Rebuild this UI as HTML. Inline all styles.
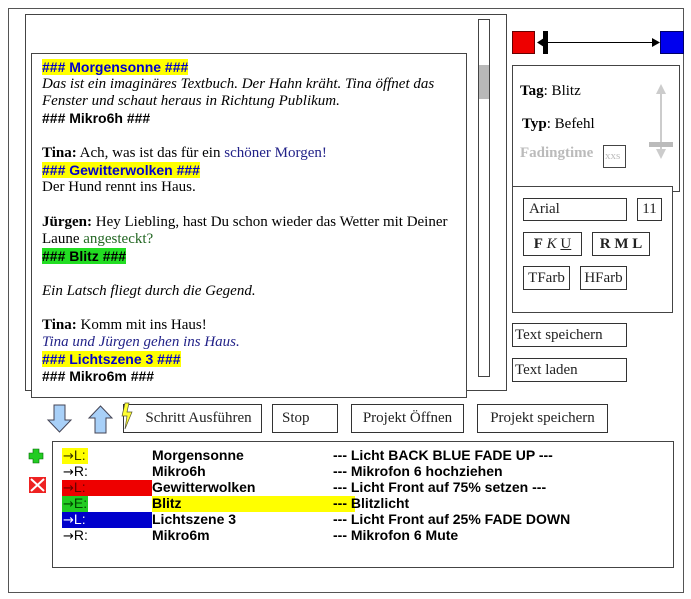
<!DOCTYPE html>
<html><head><meta charset="utf-8"><style>
body{margin:0;width:691px;height:599px;background:#fff;position:relative;overflow:hidden;font-family:"Liberation Serif",serif;}
.a{position:absolute;box-sizing:border-box;}
.b{border:1px solid #444;background:#fff;}
.t{position:absolute;left:10px;font-size:15px;line-height:17px;white-space:nowrap;color:#000;}
.h{font-family:"Liberation Sans",sans-serif;font-weight:bold;font-size:14px;}
.btn{position:absolute;box-sizing:border-box;border:1px solid #333;background:#fff;font-size:15px;color:#222;display:flex;align-items:center;justify-content:center;white-space:nowrap;}
.r{position:absolute;font-family:"Liberation Sans",sans-serif;font-weight:bold;font-size:14px;line-height:16px;white-space:nowrap;}
.l{position:absolute;font-family:"Liberation Sans",sans-serif;font-size:14px;line-height:16px;white-space:nowrap;}
.l span{font-family:"DejaVu Sans",sans-serif;font-size:13px;}
</style></head><body>
<div class="a" style="left:8px;top:8px;width:676px;height:585px;border:1px solid #555;"></div>
<div class="a b" style="left:25px;top:14px;width:482px;height:377px;"></div>
<div class="a" style="left:478px;top:19px;width:12px;height:358px;border:1px solid #444;background:#fff;"></div>
<div class="a" style="left:479px;top:65px;width:10px;height:34px;background:#b8b8b8;"></div>
<div class="a b" style="left:31px;top:53px;width:436px;height:345px;">
<div class="t" style="top:5px"><span class="h" style="background:#ff0;color:#00c">### Morgensonne ###</span></div>
<div class="t" style="top:22px;font-style:italic">Das ist ein imaginäres Textbuch. Der Hahn kräht. Tina öffnet das</div>
<div class="t" style="top:39px;font-style:italic">Fenster und schaut heraus in Richtung Publikum.</div>
<div class="t" style="top:56px"><span class="h">### Mikro6h ###</span></div>
<div class="t" style="top:91px"><b>Tina:</b> Ach, was ist das für ein <span style="color:#228">schöner Morgen!</span></div>
<div class="t" style="top:108px"><span class="h" style="background:#ff0;color:#00c">### Gewitterwolken ###</span></div>
<div class="t" style="top:125px">Der Hund rennt ins Haus.</div>
<div class="t" style="top:160px"><b>Jürgen:</b> Hey Liebling, hast Du schon wieder das Wetter mit Deiner</div>
<div class="t" style="top:177px">Laune <span style="color:#262">angesteckt?</span></div>
<div class="t" style="top:194px"><span class="h" style="background:#2d2;">### Blitz ###</span></div>
<div class="t" style="top:229px;font-style:italic">Ein Latsch fliegt durch die Gegend.</div>
<div class="t" style="top:263px"><b>Tina:</b> Komm mit ins Haus!</div>
<div class="t" style="top:280px;font-style:italic;color:#228">Tina und Jürgen gehen ins Haus.</div>
<div class="t" style="top:297px"><span class="h" style="background:#ff0;color:#00c">### Lichtszene 3 ###</span></div>
<div class="t" style="top:314px"><span class="h">### Mikro6m ###</span></div>
</div>
<!-- right -->
<div class="a" style="left:512px;top:31px;width:23px;height:23px;background:#e00;border:1px solid #600;"></div>
<div class="a" style="left:660px;top:31px;width:24px;height:23px;background:#00e;border:1px solid #006;"></div>
<svg class="a" style="left:535px;top:31px" width="126" height="23"><rect x="8" y="0" width="5" height="23" fill="#000"/><line x1="3" y1="11.5" x2="120" y2="11.5" stroke="#000"/><polygon points="2,11.5 9,7 9,16" fill="#000"/><polygon points="125,11.5 117,7 117,16" fill="#000"/></svg>
<div class="a b" style="left:512px;top:65px;width:168px;height:127px;"></div>
<div class="a" style="left:520px;top:83px;font-size:15px;"><b>Tag</b>: Blitz</div>
<div class="a" style="left:522px;top:116px;font-size:15px;"><b>Typ</b>: Befehl</div>
<div class="a" style="left:520px;top:145px;font-size:15px;color:#bbb;font-weight:bold;">Fadingtime</div>
<div class="a" style="left:603px;top:145px;width:23px;height:23px;border:1px solid #444;font-size:11px;color:#bbb;padding:4px 0 0 1px;">xxs</div>
<svg class="a" style="left:648px;top:82px" width="28" height="80"><line x1="13" y1="8" x2="13" y2="72" stroke="#ccc" stroke-width="2"/><polygon points="13,2 8,12 18,12" fill="#ccc"/><polygon points="13,77 8,67 18,67" fill="#ccc"/><rect x="1" y="60" width="24" height="5" fill="#bbb"/></svg>
<div class="a b" style="left:512px;top:186px;width:161px;height:127px;"></div>
<div class="btn" style="left:523px;top:198px;width:104px;height:23px;justify-content:flex-start;padding-left:5px;">Arial</div>
<div class="btn" style="left:637px;top:198px;width:25px;height:23px;">11</div>
<div class="btn" style="left:523px;top:232px;width:59px;height:24px;font-weight:bold;">F&nbsp;<i style="font-weight:normal">K</i>&nbsp;<u style="font-weight:normal">U</u></div>
<div class="btn" style="left:592px;top:232px;width:58px;height:24px;font-weight:bold;">R M L</div>
<div class="btn" style="left:523px;top:266px;width:47px;height:24px;">TFarb</div>
<div class="btn" style="left:580px;top:266px;width:47px;height:24px;">HFarb</div>
<div class="btn" style="left:512px;top:323px;width:115px;height:24px;justify-content:flex-start;padding-left:2px;">Text speichern</div>
<div class="btn" style="left:512px;top:358px;width:115px;height:24px;justify-content:flex-start;padding-left:2px;">Text laden</div>
<!-- bottom -->
<svg class="a" style="left:46px;top:404px" width="70" height="30"><polygon points="8,1 19,1 19,16 25,16 13.5,28 2,16 8,16" fill="#a8d0f8" stroke="#445"/><polygon points="49,29 60,29 60,14 66,14 54.5,2 43,14 49,14" fill="#a8d0f8" stroke="#445"/></svg>
<div class="btn" style="left:123px;top:404px;width:139px;height:29px;padding-left:12px;">Schritt Ausführen</div>
<svg class="a" style="left:121px;top:402px" width="14" height="28"><polygon points="4,1 8,1 6,10 11,10 4,27 6,14 1,14" fill="#ff3" stroke="#553" stroke-width="0.7"/></svg>
<div class="btn" style="left:272px;top:404px;width:66px;height:29px;justify-content:flex-start;padding-left:9px;">Stop</div>
<div class="btn" style="left:351px;top:404px;width:113px;height:29px;">Projekt Öffnen</div>
<div class="btn" style="left:477px;top:404px;width:131px;height:29px;">Projekt speichern</div>
<div class="a b" style="left:52px;top:441px;width:622px;height:127px;"></div>
<svg class="a" style="left:28px;top:445px" width="22" height="48"><path d="M5,4 h6 v4 h4 v6 h-4 v4 h-6 v-4 h-4 v-6 h4z" fill="#2c2" stroke="#060" stroke-width="0.6"/><rect x="1" y="32" width="17" height="16" fill="#e22"/><path d="M3,34 L16,46 M16,34 L3,46" stroke="#fff" stroke-width="2"/></svg>
<div class="a" style="left:62px;top:448px;width:26px;height:16px;background:#ff0"></div>
<div class="a" style="left:62px;top:480px;width:90px;height:16px;background:#e00"></div>
<div class="a" style="left:62px;top:496px;width:26px;height:16px;background:#2c2"></div>
<div class="a" style="left:152px;top:496px;width:203px;height:16px;background:#ff0"></div>
<div class="a" style="left:62px;top:512px;width:90px;height:16px;background:#00c"></div>
<div class="l" style="left:63px;top:447px;color:#330"><span>→</span>L:</div>
<div class="l" style="left:63px;top:463px"><span>→</span>R:</div>
<div class="l" style="left:63px;top:479px;color:#600"><span>→</span>L:</div>
<div class="l" style="left:63px;top:495px;color:#040"><span>→</span>E:</div>
<div class="l" style="left:63px;top:511px;color:#fff"><span>→</span>L:</div>
<div class="l" style="left:63px;top:527px"><span>→</span>R:</div>
<div class="r" style="left:152px;top:447px">Morgensonne</div>
<div class="r" style="left:152px;top:463px">Mikro6h</div>
<div class="r" style="left:152px;top:479px">Gewitterwolken</div>
<div class="r" style="left:152px;top:495px">Blitz</div>
<div class="r" style="left:152px;top:511px">Lichtszene 3</div>
<div class="r" style="left:152px;top:527px">Mikro6m</div>
<div class="r" style="left:333px;top:447px">--- Licht BACK BLUE FADE UP ---</div>
<div class="r" style="left:333px;top:463px">--- Mikrofon 6 hochziehen</div>
<div class="r" style="left:333px;top:479px">--- Licht Front auf 75% setzen ---</div>
<div class="r" style="left:333px;top:495px">--- Blitzlicht</div>
<div class="r" style="left:333px;top:511px">--- Licht Front auf 25% FADE DOWN</div>
<div class="r" style="left:333px;top:527px">--- Mikrofon 6 Mute</div>
</body></html>
